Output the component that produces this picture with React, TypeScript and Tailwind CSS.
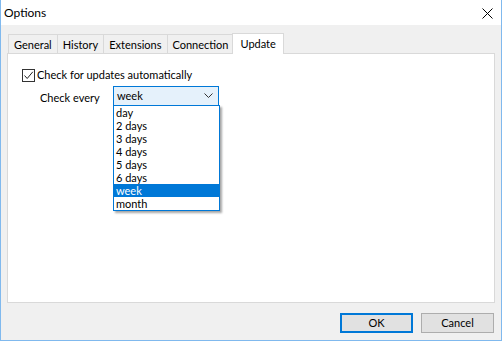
import { useState } from "react";
import { clsx } from "clsx";

const tabs = ["General", "History", "Extensions", "Connection", "Update"];
const intervals = ["day", "2 days", "3 days", "4 days", "5 days", "6 days", "week", "month"];

const font = "font-['Lato','Liberation_Sans',sans-serif]";

export default function App() {
  const [active] = useState("Update");
  const [selected] = useState("week");

  return (
    <div
      className={clsx(
        "w-[502px] h-[341px] flex flex-col bg-[#f0f0f0] border-x border-b border-[#80b9ee] text-[11px] text-black overflow-hidden",
        font,
      )}
    >
      {/* Title bar */}
      <div className="h-[25px] bg-white flex items-center justify-between pl-[3px] pr-[8px] shrink-0">
        <span className="text-[12px] leading-none">Options</span>
        <svg width="11" height="11" viewBox="0 0 11 11" className="mt-[1px]">
          <path d="M0.5 0.5 L10.5 10.5 M10.5 0.5 L0.5 10.5" stroke="#000" strokeWidth="1" />
        </svg>
      </div>

      {/* Tabs */}
      <div className="flex items-end h-[28px] pl-[7px] pt-[8px] shrink-0">
        {tabs.map((t) =>
          t === active ? (
            <div
              key={t}
              className="h-[21px] -ml-[1px] px-[7px] bg-white border-x border-t border-[#d9d9d9] flex items-start pt-[2px] relative z-10 -mb-[1px] pb-[1px]"
            >
              {t}
            </div>
          ) : (
            <div
              key={t}
              className="h-[19px] px-[5px] bg-[#f0f0f0] border-l border-t border-[#d9d9d9] flex items-center pt-[2px]"
            >
              {t}
            </div>
          ),
        )}
        <div className="flex-1" />
      </div>

      {/* Panel */}
      <div className="mx-[6px] h-[250px] bg-white border border-[#d9d9d9] relative pt-[14px] pl-[14px]">
        <label className="flex items-center gap-[2px] h-[14px]">
          <span className="w-[13px] h-[13px] border border-[#333] bg-white flex items-center justify-center">
            <svg width="11" height="11" viewBox="0 0 11 11">
              <path d="M1.5 5.5 L4.2 8.5 L9.8 1.8" fill="none" stroke="#222" strokeWidth="1" />
            </svg>
          </span>
          <span className="pt-[1px]">Check for updates automatically</span>
        </label>

        <div className="flex items-start mt-[4px] pl-[18px]">
          <span className="w-[73px] pt-[4px]">Check every</span>
          <div className="flex flex-col w-[107px]">
            <div className="h-[20px] w-[106px] bg-[#e5f1fb] border border-[#0078d7] flex items-center justify-between pl-[3px] pr-[5px]">
              <span className="pt-[1px]">{selected}</span>
              <svg width="9" height="6" viewBox="0 0 9 6">
                <path d="M0.5 0.5 L4.5 4.5 L8.5 0.5" fill="none" stroke="#333" strokeWidth="1" />
              </svg>
            </div>
            <div className="-mt-[1px] bg-white border border-[#0078d7] shadow-[2px_2px_2px_rgba(0,0,0,0.35)] flex flex-col">
              {intervals.map((i) => (
                <div
                  key={i}
                  className={clsx(
                    "h-[13px] leading-[13px] pl-[2px]",
                    i === selected ? "bg-[#0078d7] text-white" : "text-black",
                  )}
                >
                  {i}
                </div>
              ))}
            </div>
          </div>
        </div>
      </div>

      {/* Buttons */}
      <div className="flex justify-end gap-[8px] pr-[7px] pt-[10px]">
        <button className="w-[73px] h-[20px] bg-[#e1e1e1] border-2 border-[#0078d7] flex items-center justify-center">
          OK
        </button>
        <button className="w-[73px] h-[20px] bg-[#e1e1e1] border border-[#adadad] flex items-center justify-center">
          Cancel
        </button>
      </div>
    </div>
  );
}
